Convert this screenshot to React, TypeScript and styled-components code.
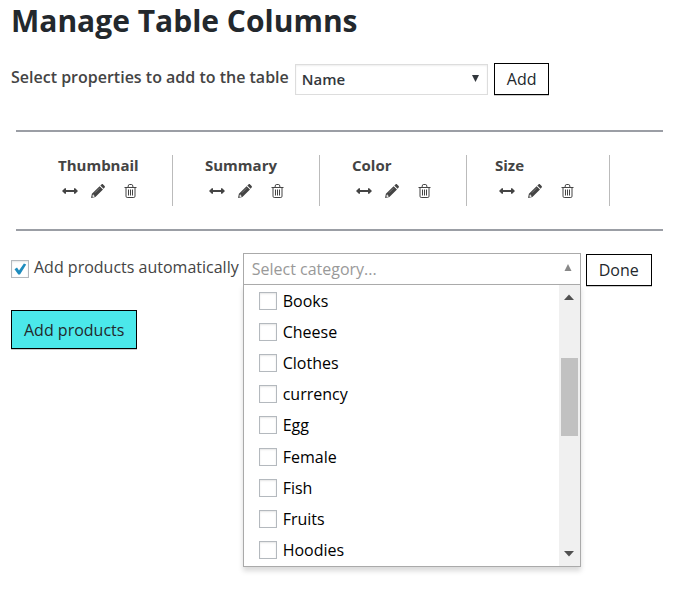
import React, { useId, useState } from "react";
import styled, { createGlobalStyle, css } from "styled-components";

const GlobalStyle = createGlobalStyle`
  *, *::before, *::after { box-sizing: border-box; }
  body {
    margin: 0;
    background: #fff;
    color: #444;
    font-family: "Open Sans", "Noto Sans", sans-serif;
    font-size: 16px;
    line-height: 22px;
  }
  button, input, select { font: inherit; color: inherit; margin: 0; }
`;

const Page = styled.main`
  min-height: 100vh;
  padding: 1px 17px 24px 11px;
`;

const Title = styled.h1`
  margin: 0;
  color: #23282d;
  font-size: 30px;
  font-weight: 700;
  line-height: 40px;
`;

const PropertyForm = styled.form`
  display: flex;
  align-items: center;
  gap: 6px;
  margin-top: 22px;
`;

const PropertyLabel = styled.label`
  font-weight: 600;
  font-size: 16px;
  line-height: 22px;
  padding-bottom: 4px;
  white-space: nowrap;
`;

const SelectBox = styled.div`
  position: relative;
  width: 193px;
`;

const PropertySelect = styled.select`
  appearance: none;
  display: block;
  width: 100%;
  height: 31px;
  padding: 0 24px 0 6px;
  border: 1px solid #ddd;
  border-radius: 0;
  background: #fff;
  box-shadow: inset 0 1px 2px rgba(0, 0, 0, 0.07);
  color: #32373c;
  font-size: 15px;
  font-weight: 600;
`;

const SelectArrow = styled.svg`
  position: absolute;
  right: 9px;
  top: 11px;
  pointer-events: none;
`;

const Button = styled.button<{ $primary?: boolean }>`
  height: 32px;
  padding: 0 12px;
  border: 1px solid #000;
  border-radius: 0;
  background: #fff;
  box-shadow: 0 1px 0 #ccc;
  color: #23282d;
  white-space: nowrap;
  ${(p) =>
    p.$primary &&
    css`
      height: 39px;
      background: #4be8ea;
    `}
`;

const Columns = styled.ul`
  display: flex;
  list-style: none;
  margin: 35px 0 0 5px;
  padding: 23px 10px;
  border: solid #9b9ea5;
  border-width: 2px 0;
`;

const Column = styled.li<{ $compact?: boolean }>`
  width: ${(p) => (p.$compact ? 143 : 147)}px;
  height: 51px;
  padding-left: ${(p) => (p.$compact ? 28 : 32)}px;
  border-right: 1px solid #bbb;
`;

const ColumnName = styled.strong`
  display: block;
  font-size: 15px;
  font-weight: 700;
  line-height: 20px;
`;

const Actions = styled.div`
  display: flex;
  align-items: center;
  margin-top: 9px;
  padding-left: 4px;
`;

const IconButton = styled.button<{ $gap?: number }>`
  display: flex;
  padding: 0;
  margin-left: ${(p) => p.$gap ?? 0}px;
  border: 0;
  background: none;
`;

const AutoRow = styled.div`
  display: flex;
  align-items: flex-start;
  gap: 4px;
  margin-top: 22px;
`;

const AutoLabel = styled.label`
  display: flex;
  gap: 5px;
  padding-top: 3px;
  white-space: nowrap;
`;

const AutoText = styled.span``;

const checkMark = `url("data:image/svg+xml,%3Csvg xmlns='http://www.w3.org/2000/svg' viewBox='0 0 16 16'%3E%3Cpath d='M2.5 8.2 5 6.6 7 9.6 11.9 2.5 14.2 3.4 8 13.6H6.3Z' fill='%231e8cbe'/%3E%3C/svg%3E")`;

const Checkbox = styled.input`
  appearance: none;
  flex: none;
  width: 18px;
  height: 18px;
  border: 1px solid #b4b9be;
  background: #fff;
  box-shadow: inset 0 1px 2px rgba(0, 0, 0, 0.1);
  &:checked { background-image: ${checkMark}; }
`;

const AutoCheckbox = styled(Checkbox)`
  margin-top: 4px;
`;

const Combo = styled.div`
  position: relative;
  width: 338px;
`;

const ComboInput = styled.input`
  display: block;
  width: 100%;
  height: 32px;
  padding: 0 30px 0 8px;
  border: 1px solid #aaa;
  border-radius: 0;
  background: #fff;
  &::placeholder { color: #999; opacity: 1; }
`;

const ComboArrow = styled.svg`
  position: absolute;
  right: 9px;
  top: 11px;
`;

const Menu = styled.div`
  position: absolute;
  top: 31px;
  left: 0;
  right: 0;
  height: 283px;
  display: flex;
  border: 1px solid #aaa;
  background: #fff;
  box-shadow: 0 4px 5px rgba(0, 0, 0, 0.15);
`;

const Options = styled.ul`
  flex: 1;
  display: flex;
  flex-direction: column;
  list-style: none;
  margin: 0;
  padding: 0 0 0 15px;
`;

const Option = styled.li`
  flex: 1;
  display: flex;
`;

const OptionLabel = styled.label`
  display: flex;
  align-items: center;
  gap: 6px;
  color: #000;
  font-size: 16px;
`;

const ScrollTrack = styled.div`
  width: 21px;
  padding: 9px 2px;
  display: flex;
  flex-direction: column;
  align-items: center;
  background: #f0f0f0;
`;

const ScrollThumb = styled.div`
  width: 17px;
  height: 78px;
  margin: 58px 0 auto;
  background: #c1c1c1;
`;

const DoneSlot = styled.div`
  padding: 1px 0 0 1px;
`;

const Footer = styled.div`
  margin-top: 24px;
`;

const ArrowsIcon = () => (
  <svg width="16" height="14" viewBox="0 0 16 14" fill="#444" aria-hidden="true">
    <path d="M0 7 2.8 4.2H4V6h8V4.2h1.2L16 7l-2.8 2.8H12V8H4v1.8H2.8Z" />
  </svg>
);

const PencilIcon = () => (
  <svg width="14" height="14" viewBox="0 0 14 14" fill="#444" aria-hidden="true">
    <path
      fillRule="evenodd"
      d="M8.6 2.2 12 5.5 4.4 13.1 0 14 .9 9.8ZM2 10.6l-.7 1.7.8.7 1.5-.5v-.8H2.7v-1Z"
    />
    <path d="M9.3 1.5 10.5.4c.5-.5 1.1-.5 1.6 0l1.5 1.5c.5.5.5 1.1 0 1.6l-1 1.2Z" />
    <path d="m4 8.7 4.5-4.5" stroke="#999" strokeWidth=".6" />
  </svg>
);

const TrashIcon = () => (
  <svg width="13" height="14" viewBox="0 0 13 14" fill="none" stroke="#444" aria-hidden="true">
    <path d="M.5 3.5h12M4 3.2 4.5 1q.2-.5.8-.5h2.4q.6 0 .8.5L9 3.2M2 3.5v8.7q0 1.3 1.2 1.3h6.6q1.2 0 1.2-1.3V3.5" />
    <path d="M4.5 5.5v6M6.5 5.5v6M8.5 5.5v6" />
  </svg>
);

const Triangle = ({ down }: { down?: boolean }) => (
  <svg width="10" height="6" viewBox="0 0 10 6" fill="#505050" aria-hidden="true">
    <path d={down ? "M0 0h10L5 5.5Z" : "M0 6h10L5 .5Z"} />
  </svg>
);

const tableColumns = ["Thumbnail", "Summary", "Color", "Size"];
const categories = [
  "Books", "Cheese", "Clothes", "currency", "Egg", "Female", "Fish", "Fruits", "Hoodies",
];

const ColumnItem = ({ name }: { name: string }) => (
  <Column $compact={name === "Size"}>
    <ColumnName>{name}</ColumnName>
    <Actions>
      <IconButton type="button" aria-label={`Move ${name}`}><ArrowsIcon /></IconButton>
      <IconButton type="button" $gap={13} aria-label={`Edit ${name}`}><PencilIcon /></IconButton>
      <IconButton type="button" $gap={19} aria-label={`Delete ${name}`}><TrashIcon /></IconButton>
    </Actions>
  </Column>
);

const CategoryOption = ({ name }: { name: string }) => {
  const id = useId();
  return (
    <Option>
      <OptionLabel htmlFor={id}>
        <Checkbox type="checkbox" id={id} />
        {name}
      </OptionLabel>
    </Option>
  );
};

export default function App() {
  const [auto, setAuto] = useState(true);
  return (
    <>
      <GlobalStyle />
      <Page>
        <Title>Manage Table Columns</Title>
        <PropertyForm onSubmit={(e) => e.preventDefault()}>
          <PropertyLabel htmlFor="property">Select properties to add to the table</PropertyLabel>
          <SelectBox>
            <PropertySelect id="property" defaultValue="Name">
              <option>Name</option>
            </PropertySelect>
            <SelectArrow width="7" height="7" viewBox="0 0 7 7" fill="#32373c" aria-hidden="true">
              <path d="M0 0h7L3.5 7Z" />
            </SelectArrow>
          </SelectBox>
          <Button type="submit">Add</Button>
        </PropertyForm>
        <Columns>
          {tableColumns.map((name) => <ColumnItem key={name} name={name} />)}
        </Columns>
        <AutoRow>
          <AutoLabel>
            <AutoCheckbox type="checkbox" checked={auto} onChange={(e) => setAuto(e.target.checked)} />
            <AutoText>Add products automatically</AutoText>
          </AutoLabel>
          <Combo>
            <ComboInput type="text" placeholder="Select category..." aria-label="Select category" />
            <ComboArrow width="8" height="7" viewBox="0 0 8 7" fill="#888" aria-hidden="true">
              <path d="M.5 7h7L4 0Z" />
            </ComboArrow>
            <Menu>
              <Options>
                {categories.map((name) => <CategoryOption key={name} name={name} />)}
              </Options>
              <ScrollTrack>
                <Triangle />
                <ScrollThumb />
                <Triangle down />
              </ScrollTrack>
            </Menu>
          </Combo>
          <DoneSlot>
            <Button type="button">Done</Button>
          </DoneSlot>
        </AutoRow>
        <Footer>
          <Button type="button" $primary>Add products</Button>
        </Footer>
      </Page>
    </>
  );
}
